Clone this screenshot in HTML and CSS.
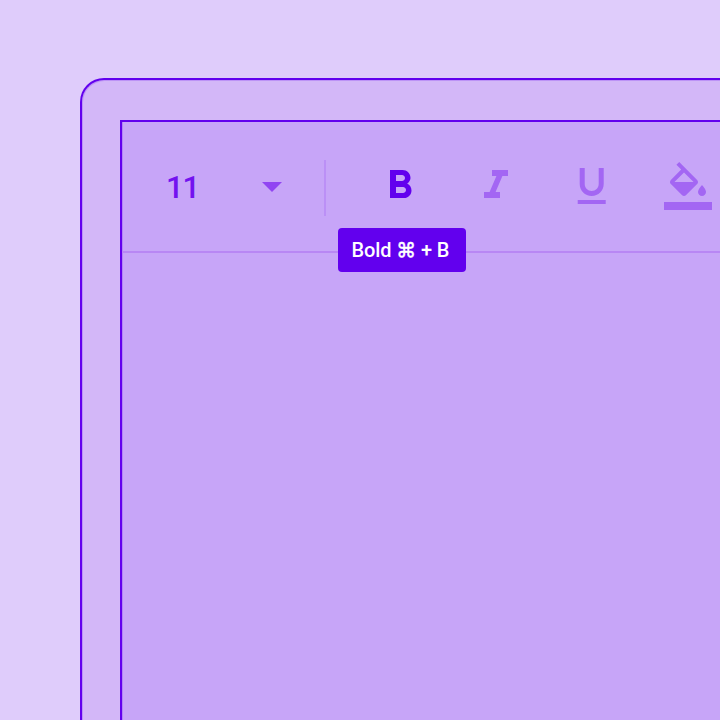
FILE: index.html
```html
<!DOCTYPE html>
<html lang="en">
<head>
<meta charset="utf-8">
<title>Text editor toolbar</title>
<link rel="stylesheet" href="styles.css">
</head>
<body>
<div class="window">
  <main class="document">
    <div class="toolbar">
      <div class="font-size">
        <span class="size-value">11</span>
        <svg class="icon caret" viewBox="0 0 24 24"><path d="M7 10l5 5 5-5z"/></svg>
      </div>
      <div class="divider"></div>
      <div class="tools">
        <div class="tool active">
          <svg class="icon" viewBox="0 0 24 24"><path d="M15.6 10.79c.97-.67 1.65-1.77 1.65-2.79 0-2.26-1.75-4-4-4H7v14h7.04c2.09 0 3.71-1.7 3.71-3.79 0-1.52-.86-2.82-2.15-3.42zM10 6.5h3c.83 0 1.5.67 1.5 1.5s-.67 1.5-1.5 1.5h-3v-3zm3.5 9H10v-3h3.5c.83 0 1.5.67 1.5 1.5s-.67 1.5-1.5 1.5z"/></svg>
          <div class="tooltip">Bold <span class="key">⌘</span> + B</div>
        </div>
        <div class="tool"><svg class="icon" viewBox="0 0 24 24"><path d="M10 4v3h2.21l-3.42 8H6v3h8v-3h-2.21l3.42-8H18V4z"/></svg></div>
        <div class="tool"><svg class="icon" viewBox="0.15 0 24 24"><path d="M12 17c3.31 0 6-2.69 6-6V3h-2.5v8c0 1.93-1.57 3.5-3.5 3.5S8.5 12.93 8.5 11V3H6v8c0 3.31 2.69 6 6 6zm-7 2v2h14v-2H5z"/></svg></div>
        <div class="tool"><svg class="icon" viewBox="0 0 24 24"><path d="M16.56 8.94L7.62 0 6.21 1.41l2.38 2.38-5.15 5.15c-.59.59-.59 1.54 0 2.12l5.5 5.5c.29.29.68.44 1.06.44s.77-.15 1.06-.44l5.5-5.5c.59-.58.59-1.53 0-2.12zM5.21 10L10 5.21 14.79 10H5.21zM19 11.5s-2 2.17-2 3.5c0 1.1.9 2 2 2s2-.9 2-2c0-1.33-2-3.5-2-3.5z"/><path d="M0 20h24v4H0z"/></svg></div>
      </div>
    </div>
  </main>
</div>
</body>
</html>
```
FILE: styles.css
```css
* { box-sizing: border-box; }
body {
  margin: 0;
  width: 720px;
  height: 720px;
  overflow: hidden;
  padding: 78px 0 0 80px;
  background: #dfccfb;
  font-family: Roboto, "Liberation Sans", sans-serif;
}
.window {
  width: 640px;
  height: 642px;
  padding: 40px 0 0 38px;
  border: solid #6200ee;
  border-width: 2px 0 0 2px;
  border-radius: 24px 0 0 0;
  background: #d3b7f8;
  box-shadow: inset 0.5px 0.5px 0 0.5px rgba(98, 0, 238, 0.2);
}
.document {
  width: 600px;
  height: 600px;
  border: solid #6200ee;
  border-width: 2px 0 0 2px;
  background: #c7a5f8;
  box-shadow: inset 1px 0 0 rgba(98, 0, 238, 0.2);
}
.toolbar {
  display: flex;
  height: 131px;
  padding: 38px 0 0 44px;
  border-bottom: 2px solid #b887f4;
}
.font-size {
  display: flex;
  justify-content: space-between;
  width: 130px;
  height: 52px;
  padding-top: 2px;
}
.size-value {
  font-size: 31px;
  font-weight: 500;
  line-height: 52px;
  letter-spacing: -1px;
  color: #7312ef;
}
.icon {
  display: block;
  flex: none;
  width: 48px;
  height: 48px;
  fill: #a366f3;
}
.caret { fill: #9145f2; }
.divider {
  flex: none;
  width: 2px;
  height: 56px;
  margin-left: 28px;
  background: #bb90f6;
}
.tools {
  display: flex;
  gap: 48px;
  padding: 2px 0 0 50px;
}
.tool { position: relative; }
.active .icon { fill: #6200ee; }
.tooltip {
  position: absolute;
  top: 66px;
  left: -38px;
  width: 128px;
  height: 44px;
  padding-left: 13.5px;
  border-radius: 4px;
  background: #6200ee;
  color: #fff;
  font-size: 20px;
  font-weight: 500;
  line-height: 44px;
  letter-spacing: -0.1px;
  white-space: nowrap;
}
.key {
  font-family: Inter, "DejaVu Sans", sans-serif;
  -webkit-text-stroke: 0.3px #fff;
}
```
